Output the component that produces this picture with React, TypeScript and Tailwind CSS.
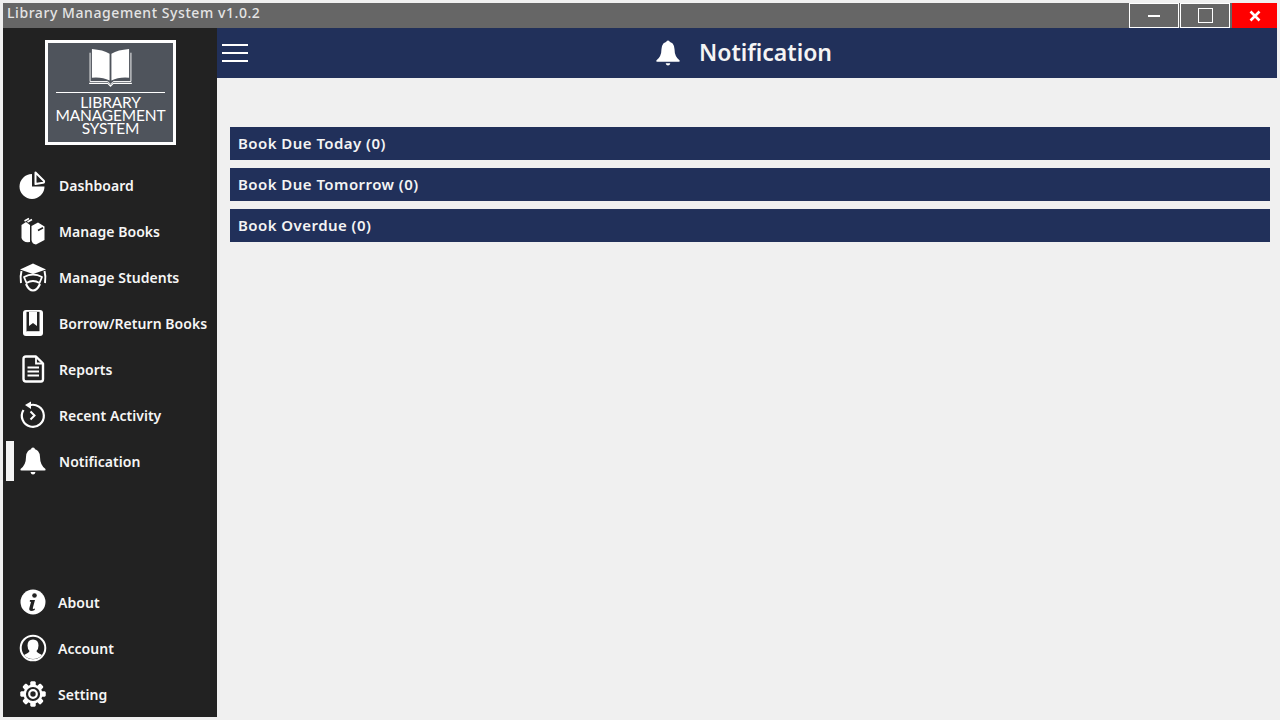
import React from "react";

const Pie = () => (
  <svg width="30" height="30" viewBox="0 0 30 30">
    <path d="M14 4 A12.500 12.500 0 1 0 26.500 16.500 L14 16.500 Z" fill="#fff" />
    <path d="M17.500 2.500 L26 11 Q26.500 12.500 25 12.800 L17.500 14 Z" fill="none" stroke="#fff" strokeWidth="2" strokeLinejoin="round" />
  </svg>
);
const Books = () => (
  <svg width="30" height="30" viewBox="0 0 30 30">
    <path d="M3.500 9 L8 6 L12 9 L12 26 Q5 27 3.500 22 Z" fill="#fff" />
    <path d="M6.500 5 L11 2.500 M9.500 6 L14 3.500" stroke="#fff" strokeWidth="1.600" />
    <path d="M13.500 10 L20 6.500 L26.500 10.500 L26.500 24 L18 28.500 Q14 28 13.500 24 Z" fill="#fff" />
    <path d="M20 14.500 L25 11.800" stroke="#222" strokeWidth="1.600" />
  </svg>
);
const Student = () => (
  <svg width="30" height="30" viewBox="0 0 30 30">
    <path d="M15 1.500 L28 7.500 L15 12 L2 7.500 Z" fill="#fff" />
    <path d="M3.500 9 Q2 14 3 21 M26.500 9 Q28 14 27 21" stroke="#fff" strokeWidth="2" fill="none" />
    <path d="M6 15 Q15 10 24 15 L21.500 21 Q15 17 8.500 21 Z" fill="none" stroke="#fff" strokeWidth="1.800" strokeLinejoin="round" />
    <path d="M8 22 Q11 28.500 15 28.500 Q19 28.500 22 22" stroke="#fff" strokeWidth="2.200" fill="none" />
  </svg>
);
const BookMark = () => (
  <svg width="30" height="30" viewBox="0 0 30 30">
    <rect x="5" y="2" width="20" height="26" rx="3" fill="#fff" />
    <rect x="8.500" y="3.800" width="13" height="20" fill="#222" />
    <path d="M11 4 H19 V18 L15 15 L11 18 Z" fill="#fff" />
    <path d="M8.500 24 H25" stroke="#fff" strokeWidth="1.500" />
  </svg>
);
const Report = () => (
  <svg width="30" height="30" viewBox="0 0 30 30">
    <path d="M8 2.500 H18 L25 9.500 V25 Q25 27.500 23 27.500 H8 Q5.500 27.500 5.500 25 V5 Q5.500 2.500 8 2.500 Z" fill="none" stroke="#fff" strokeWidth="2.400" strokeLinejoin="round" />
    <path d="M18 3 V9.500 H25" fill="none" stroke="#fff" strokeWidth="1.800" />
    <path d="M9.500 13.500 H21 M9.500 17.500 H21 M9.500 21.500 H21" stroke="#fff" strokeWidth="2" />
  </svg>
);
const Recent = () => (
  <svg width="30" height="30" viewBox="0 0 30 30">
    <path d="M11 5.500 A11 11 0 1 1 5.500 10" fill="none" stroke="#fff" strokeWidth="2.200" />
    <path d="M13 1.500 L13 9 L7 5 Z" fill="#fff" />
    <path d="M12.500 11.500 L16.500 15.500 L12.500 19.500" fill="none" stroke="#fff" strokeWidth="2" />
  </svg>
);
const Bell = ({ s = 30 }: { s?: number }) => (
  <svg width={s} height={s} viewBox="0 0 30 30">
    <circle cx="15" cy="3.500" r="2" fill="#fff" />
    <path d="M15 3 Q21.500 3 22 11 Q22 19 27.500 23 Q28 24.500 26.500 24.500 H3.500 Q2 24.500 2.500 23 Q8 19 8 11 Q8.500 3 15 3 Z" fill="#fff" />
    <path d="M12.500 26 H17.500 Q17 28.500 15 28.500 Q13 28.500 12.500 26 Z" fill="#fff" />
  </svg>
);
const Info = () => (
  <svg width="30" height="30" viewBox="0 0 30 30">
    <circle cx="15" cy="15" r="12.500" fill="#fff" />
    <circle cx="16.500" cy="8.500" r="2.300" fill="#222" />
    <path d="M12 13 H17 L14.800 21 Q14.500 22.500 17 21.500 L16.700 23 Q15 24 13 24 Q10.500 23.500 11.500 20.500 L13 15 L11.700 14.500 Z" fill="#222" />
  </svg>
);
const Account = () => (
  <svg width="30" height="30" viewBox="0 0 30 30">
    <circle cx="15" cy="15" r="12.300" fill="none" stroke="#fff" strokeWidth="2" />
    <path d="M15 6.500 Q20.500 6.500 20.500 12.500 Q20.500 16 18.500 18 Q18.500 19.500 24 22 Q20.500 26 15 26 Q9.500 26 6 22 Q11.500 19.500 11.500 18 Q9.500 16 9.500 12.500 Q9.500 6.500 15 6.500 Z" fill="#fff" />
  </svg>
);
const Gear = () => (
  <svg width="30" height="30" viewBox="0 0 30 30">
    <g fill="#fff">
      {[0, 45, 90, 135, 180, 225, 270, 315].map((a) => (
        <rect key={a} x="12.500" y="2.500" width="5" height="25" rx="1" transform={`rotate(${a} 15 15)`} />
      ))}
    </g>
    <circle cx="15" cy="15" r="8.300" fill="#222" stroke="#fff" strokeWidth="2.400" />
    <circle cx="15" cy="15" r="3.800" fill="none" stroke="#fff" strokeWidth="2.200" />
  </svg>
);

const top = [
  { label: "Dashboard", icon: <Pie /> },
  { label: "Manage Books", icon: <Books /> },
  { label: "Manage Students", icon: <Student /> },
  { label: "Borrow/Return Books", icon: <BookMark /> },
  { label: "Reports", icon: <Report /> },
  { label: "Recent Activity", icon: <Recent /> },
  { label: "Notification", icon: <Bell />, active: true },
];
const bottom = [
  { label: "About", icon: <Info /> },
  { label: "Account", icon: <Account /> },
  { label: "Setting", icon: <Gear /> },
];

function Item({ label, icon, active, gap }: { label: string; icon: React.ReactNode; active?: boolean; gap: string }) {
  return (
    <div className="flex h-[46px] items-center">
      <div className={`ml-[3px] h-[40px] w-[8px] ${active ? "bg-[#f4f4f4]" : ""}`} />
      <div className="ml-[4px] flex w-[30px] justify-center">{icon}</div>
      <span className={`${gap} pt-[1px] text-[14px] font-semibold tracking-[0.04px] text-[#f6f6f6] whitespace-nowrap`}>{label}</span>
    </div>
  );
}

export default function App() {
  return (
    <div className="h-[720px] w-[1280px] overflow-hidden bg-[#f0f0f0] p-[3px] font-['Noto_Sans',sans-serif]">
      <div className="flex h-[714px] w-[1274px] flex-col">
        <div className="flex h-[25px] items-stretch justify-between bg-[#666666]">
          <span className="pl-[4px] text-[14px] leading-[20px] font-medium tracking-[0.57px] text-[#e4e4e4]">Library Management System v1.0.2</span>
          <div className="flex">
            <div className="flex w-[50px] items-center justify-center border border-white">
              <div className="h-[2px] w-[12px] bg-white" />
            </div>
            <div className="ml-px flex w-[50px] items-center justify-center border border-white">
              <div className="h-[15px] w-[15px] border border-white" />
            </div>
            <div className="ml-[2px] flex w-[45px] items-center justify-center bg-[#ff0000] pl-[1px]">
              <svg width="12" height="12" viewBox="0 0 12 12"><path d="M1.500 1.500 L10.500 10.500 M10.500 1.500 L1.500 10.500" stroke="#fff" strokeWidth="2.600" /></svg>
            </div>
          </div>
        </div>
        <div className="flex flex-1">
          <aside className="flex w-[214px] flex-col bg-[#222222]">
            <div className="mt-[12px] ml-[42px] flex h-[105px] w-[131px] flex-col items-center border-[3px] border-white bg-[#4f545c] text-white">
              <svg width="45" height="39" viewBox="0 0 48 42" className="mt-[6px] shrink-0">
                <path d="M2 4 L2 35 L21 35 L24 38 L27 35 L46 35 L46 4" fill="none" stroke="#fff" strokeWidth="1" />
                <path d="M4 0 Q16 1 23 5 L23 34 Q15 30 4 31 Z" fill="#fff" />
                <path d="M44 0 Q32 1 25 5 L25 34 Q33 30 44 31 Z" fill="#fff" />
                <path d="M1 37 L21 37 L24 40 L27 37 L47 37" fill="none" stroke="#fff" strokeWidth="1.200" />
              </svg>
              <div className="mt-[4px] h-px w-[109px] shrink-0 bg-white" />
              <div className="mt-[3px] text-center font-['Lato',sans-serif] text-[15.500px] leading-[13px] tracking-[-0.15px] whitespace-nowrap">
                LIBRARY<br />MANAGEMENT<br />SYSTEM
              </div>
            </div>
            <nav className="mt-[17px] flex flex-col">
              {top.map((i) => <Item key={i.label} {...i} gap="ml-[11px]" />)}
            </nav>
            <nav className="mt-auto flex flex-col">
              {bottom.map((i) => <Item key={i.label} {...i} gap="ml-[10px]" />)}
            </nav>
          </aside>
          <main className="flex flex-1 flex-col">
            <header className="flex h-[50px] items-center bg-[#21305a]">
              <div className="ml-[5px] flex w-[26px] flex-col gap-[6px]">
                <div className="h-[2px] bg-white" />
                <div className="h-[2px] bg-white" />
                <div className="h-[2px] bg-white" />
              </div>
              <div className="ml-[406px] flex items-center">
                <Bell s={28} />
                <span className="ml-[17px] pb-[1px] text-[23px] font-semibold text-[#f4f4f4]">Notification</span>
              </div>
            </header>
            <section className="flex flex-col gap-[8px] pt-[49px] pr-[7px] pl-[13px]">
              {["Book Due Today (0)", "Book Due Tomorrow (0)", "Book Overdue (0)"].map((t) => (
                <div key={t} className="flex h-[33px] items-center bg-[#21305a] pl-[8px] text-[15px] font-semibold tracking-[0.45px] text-[#f4f4f4]">{t}</div>
              ))}
            </section>
          </main>
        </div>
      </div>
    </div>
  );
}
